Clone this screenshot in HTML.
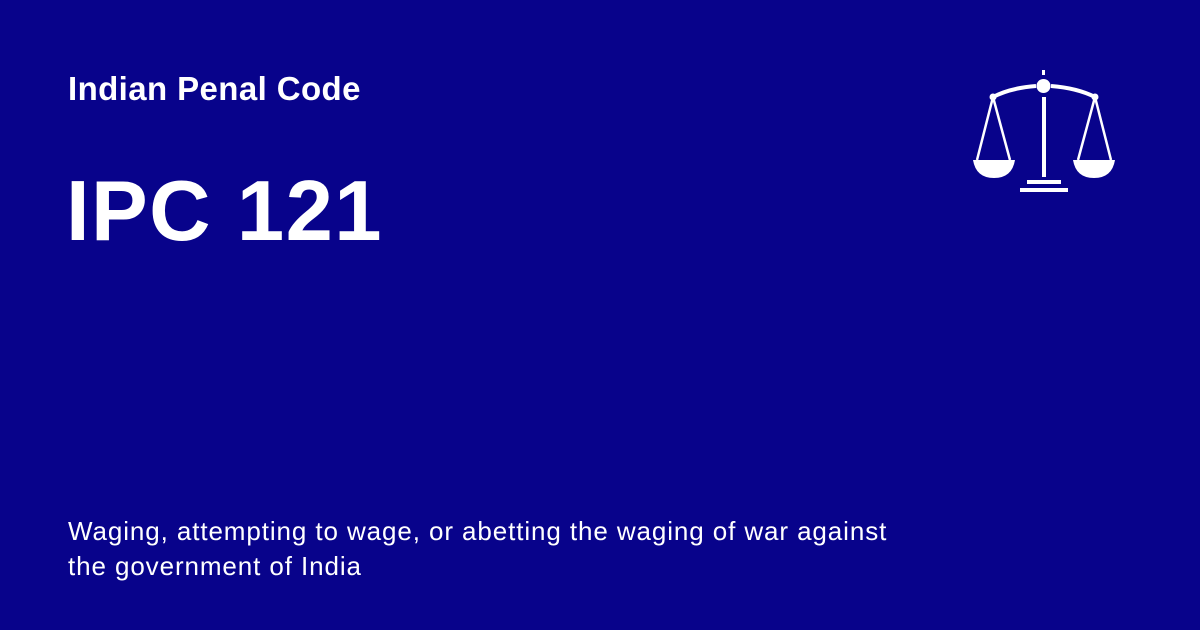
<!DOCTYPE html>
<html><head><style>
body{margin:0;width:1200px;height:630px;background:#08038b;font-family:"Liberation Sans",Arial,sans-serif;color:#fff;position:relative;overflow:hidden}
.t1{position:absolute;left:68px;top:70px;font-size:33px;font-weight:bold;letter-spacing:0.4px}
.t2{position:absolute;left:66px;top:163px;font-size:85px;font-weight:bold;letter-spacing:1.4px}
.t3{position:absolute;left:68px;top:514px;font-size:26px;line-height:35px;letter-spacing:0.9px}
</style></head><body>
<div class="t1">Indian Penal Code</div>
<div class="t2">IPC 121</div>
<div class="t3">Waging, attempting to wage, or abetting the waging of war against<br>the government of India</div>
<svg style="position:absolute;left:0;top:0" width="1200" height="630">
<g fill="#fff" stroke="#fff">
<rect x="1042" y="70" width="3" height="5" stroke="none"/>
<circle cx="1043.5" cy="86" r="7" stroke="none"/>
<path d="M1036 86 Q1010 88 993 97 M1051 86 Q1077 88 1095 97" fill="none" stroke-width="4"/>
<circle cx="993" cy="97" r="3.5" stroke="none"/>
<circle cx="1095" cy="97" r="3.5" stroke="none"/>
<rect x="1042" y="97" width="4" height="80" stroke="none"/>
<rect x="1027" y="180" width="34" height="4" stroke="none"/>
<rect x="1020" y="188" width="48" height="4" stroke="none"/>
<path d="M993 97 L977 160 M993 97 L1010 160 M1095 97 L1078 160 M1095 97 L1111 160" fill="none" stroke-width="2.5"/>
<path d="M973 160 H1015 Q1012 178 994 178 Q976 178 973 160Z" stroke="none"/>
<path d="M1073 160 H1115 Q1112 178 1094 178 Q1076 178 1073 160Z" stroke="none"/>
</g></svg>
</body></html>
